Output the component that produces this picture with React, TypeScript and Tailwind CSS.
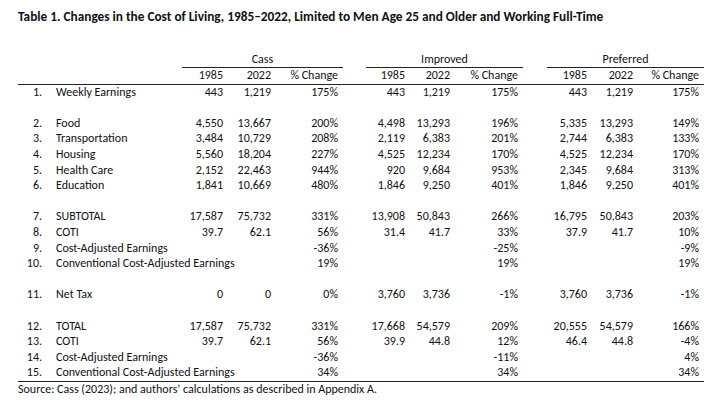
type Cells = [string, string, string];

interface Row {
  n?: string;
  label?: string;
  cass?: Cells;
  imp?: Cells;
  pref?: Cells;
}

const rows: Row[] = [
  { n: "1.", label: "Weekly Earnings", cass: ["443", "1,219", "175%"], imp: ["443", "1,219", "175%"], pref: ["443", "1,219", "175%"] },
  {},
  { n: "2.", label: "Food", cass: ["4,550", "13,667", "200%"], imp: ["4,498", "13,293", "196%"], pref: ["5,335", "13,293", "149%"] },
  { n: "3.", label: "Transportation", cass: ["3,484", "10,729", "208%"], imp: ["2,119", "6,383", "201%"], pref: ["2,744", "6,383", "133%"] },
  { n: "4.", label: "Housing", cass: ["5,560", "18,204", "227%"], imp: ["4,525", "12,234", "170%"], pref: ["4,525", "12,234", "170%"] },
  { n: "5.", label: "Health Care", cass: ["2,152", "22,463", "944%"], imp: ["920", "9,684", "953%"], pref: ["2,345", "9,684", "313%"] },
  { n: "6.", label: "Education", cass: ["1,841", "10,669", "480%"], imp: ["1,846", "9,250", "401%"], pref: ["1,846", "9,250", "401%"] },
  {},
  { n: "7.", label: "SUBTOTAL", cass: ["17,587", "75,732", "331%"], imp: ["13,908", "50,843", "266%"], pref: ["16,795", "50,843", "203%"] },
  { n: "8.", label: "COTI", cass: ["39.7", "62.1", "56%"], imp: ["31.4", "41.7", "33%"], pref: ["37.9", "41.7", "10%"] },
  { n: "9.", label: "Cost-Adjusted Earnings", cass: ["", "", "-36%"], imp: ["", "", "-25%"], pref: ["", "", "-9%"] },
  { n: "10.", label: "Conventional Cost-Adjusted Earnings", cass: ["", "", "19%"], imp: ["", "", "19%"], pref: ["", "", "19%"] },
  {},
  { n: "11.", label: "Net Tax", cass: ["0", "0", "0%"], imp: ["3,760", "3,736", "-1%"], pref: ["3,760", "3,736", "-1%"] },
  {},
  { n: "12.", label: "TOTAL", cass: ["17,587", "75,732", "331%"], imp: ["17,668", "54,579", "209%"], pref: ["20,555", "54,579", "166%"] },
  { n: "13.", label: "COTI", cass: ["39.7", "62.1", "56%"], imp: ["39.9", "44.8", "12%"], pref: ["46.4", "44.8", "-4%"] },
  { n: "14.", label: "Cost-Adjusted Earnings", cass: ["", "", "-36%"], imp: ["", "", "-11%"], pref: ["", "", "4%"] },
  { n: "15.", label: "Conventional Cost-Adjusted Earnings", cass: ["", "", "34%"], imp: ["", "", "34%"], pref: ["", "", "34%"] },
];

// column tracks measured off the source table
const GRID =
  "grid grid-cols-[26px_138px_41px_48px_67px_5px_23px_39px_45px_68px_5px_24px_40px_46px_66px_5px]";

function Group({ cells }: { cells?: Cells }) {
  const c = cells ?? ["", "", ""];
  return (
    <>
      <span className="text-right">{c[0]}</span>
      <span className="text-right">{c[1]}</span>
      <span className="text-right">{c[2]}</span>
      <span />
    </>
  );
}

function HeadGroup({ name }: { name: string }) {
  return <span className="col-span-4 border-b border-[#222] text-center">{name}</span>;
}

function YearGroup() {
  return (
    <>
      <span className="text-right">1985</span>
      <span className="text-right">2022</span>
      <span className="text-right">% Change</span>
      <span />
    </>
  );
}

export default function App() {
  return (
    <div className="h-[415px] w-[717px] bg-white pl-[18px] pt-[9px] font-[Carlito,Calibri,Lato,sans-serif] text-[12px] text-[#111]">
      <h1 className="text-[13.3px] font-bold leading-[16px]">
        Table 1. Changes in the Cost of Living, 1985–2022, Limited to Men Age 25 and Older and Working Full-Time
      </h1>

      <div className="mt-[27px] w-[686px]">
        <div className={`${GRID} leading-[15px]`}>
          <span className="col-span-2" />
          <HeadGroup name="Cass" />
          <span />
          <HeadGroup name="Improved" />
          <span />
          <HeadGroup name="Preferred" />
        </div>
        <div className={`${GRID} border-b border-[#222] leading-[15.6px]`}>
          <span className="col-span-2" />
          <YearGroup />
          <span />
          <YearGroup />
          <span />
          <YearGroup />
        </div>

        <div className="border-b border-[#222]">
          {rows.map((r, i) => (
            <div key={i} className={`${GRID} h-[15.6px] leading-[15.6px]`}>
              <span className="pr-[2px] text-right">{r.n}</span>
              <span className="whitespace-nowrap pl-[12px]">{r.label}</span>
              <Group cells={r.cass} />
              <span />
              <Group cells={r.imp} />
              <span />
              <Group cells={r.pref} />
            </div>
          ))}
        </div>

        <p className="leading-[15px]">
          Source: Cass (2023); and authors’ calculations as described in Appendix A.
        </p>
      </div>
    </div>
  );
}
